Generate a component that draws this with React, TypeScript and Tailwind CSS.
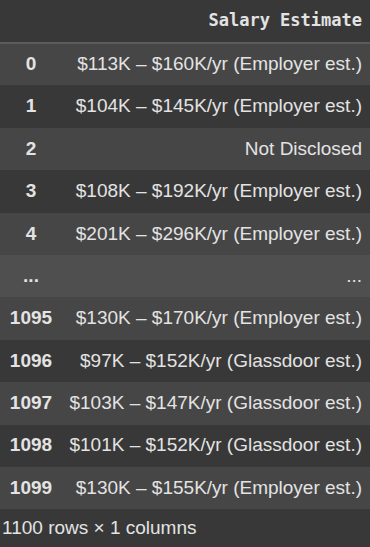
import React from 'react';

const rows: { idx: string; value: string }[] = [
  { idx: '0', value: '$113K – $160K/yr (Employer est.)' },
  { idx: '1', value: '$104K – $145K/yr (Employer est.)' },
  { idx: '2', value: 'Not Disclosed' },
  { idx: '3', value: '$108K – $192K/yr (Employer est.)' },
  { idx: '4', value: '$201K – $296K/yr (Employer est.)' },
  { idx: '...', value: '...' },
  { idx: '1095', value: '$130K – $170K/yr (Employer est.)' },
  { idx: '1096', value: '$97K – $152K/yr (Glassdoor est.)' },
  { idx: '1097', value: '$103K – $147K/yr (Glassdoor est.)' },
  { idx: '1098', value: '$101K – $152K/yr (Glassdoor est.)' },
  { idx: '1099', value: '$130K – $155K/yr (Employer est.)' },
];

export default function App() {
  return (
    <div className="w-[370px] h-[547px] bg-[#383838] text-[#e3e3e3] font-['Liberation_Sans',Arial,sans-serif] overflow-hidden">
      <table className="w-full border-collapse">
        <thead>
          <tr className="h-[43px] border-b-2 border-[#5c5c5c]">
            <th className="w-[62px]" />
            <th className="text-right pr-[8px] font-['DejaVu_Sans_Mono',monospace] font-bold text-[17px]">Salary Estimate</th>
          </tr>
        </thead>
        <tbody>
          {rows.map((r, i) => {
            const bg = r.idx === '...' ? 'bg-[#4f4f4f]' : i % 2 === 0 ? 'bg-[#464646]' : 'bg-[#383838]';
            return (
              <tr key={r.idx} className={`h-[42.4px] ${bg}`}>
                <th className="w-[62px] text-center font-bold text-[19px]">{r.idx}</th>
                <td className="text-right pr-[8px] text-[19px]">{r.value}</td>
              </tr>
            );
          })}
        </tbody>
      </table>
      <div className="pl-[2px] pt-[5px] text-[19px]">1100 rows × 1 columns</div>
    </div>
  );
}
